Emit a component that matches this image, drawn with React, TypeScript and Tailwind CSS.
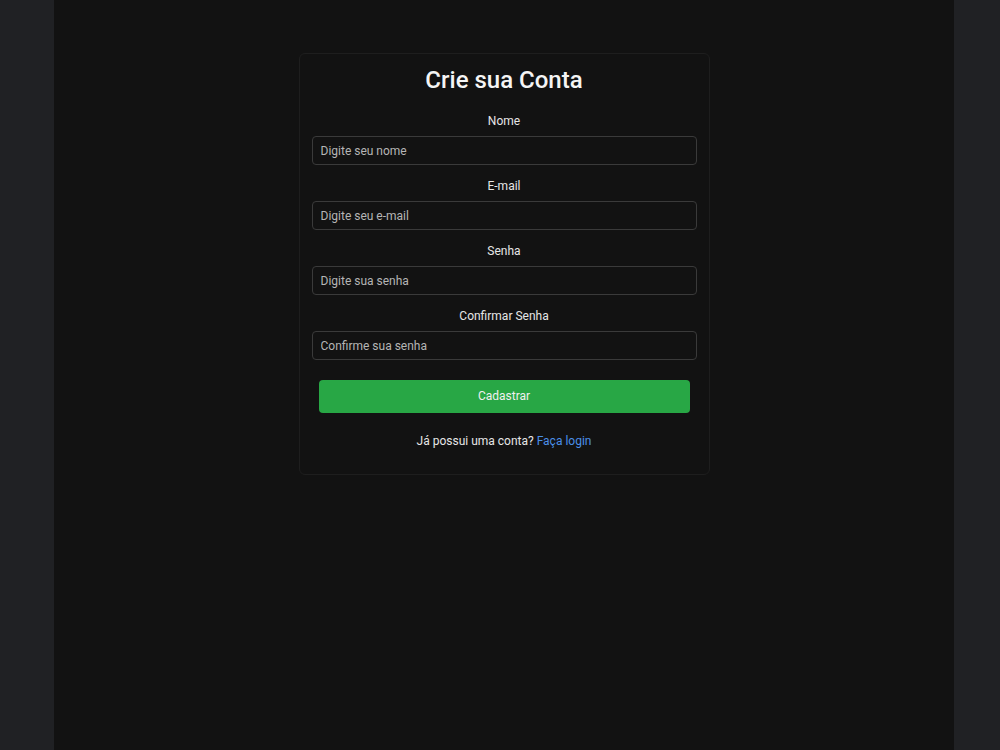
export default function App() {
    const fields = [
        { label: 'Nome', type: 'text', placeholder: 'Digite seu nome' },
        { label: 'E-mail', type: 'email', placeholder: 'Digite seu e-mail' },
        { label: 'Senha', type: 'password', placeholder: 'Digite sua senha' },
        { label: 'Confirmar Senha', type: 'password', placeholder: 'Confirme sua senha' },
    ];

    return (
        <div className="min-h-screen bg-[#202124] font-['Roboto',sans-serif]">
            <div className="ml-[54px] min-h-screen w-[900px] bg-[#121212] pt-[53px]">
                <div className="mx-auto w-[411px] rounded-md border border-[#1e1e1e] bg-[#121212] px-3 pt-3 pb-[24px]">
                    <h2 className="text-center text-[24px] leading-[29px] font-medium text-[#f5f5f5]">Crie sua Conta</h2>
                    <form className="mt-[18px] flex flex-col">
                        {fields.map(({ label, type, placeholder }) => (
                            <div key={label} className="mb-[13px] flex flex-col">
                                <label className="mb-[6px] text-center text-[12px] leading-[17px] text-[#e6e6e6]">{label}</label>
                                <input
                                    type={type}
                                    placeholder={placeholder}
                                    className="h-[29px] rounded-[4px] border border-[#3a3a3a] bg-[#121212] px-2 text-[12px] text-[#e6e6e6] placeholder:text-[#b5b5b5] outline-none"
                                />
                            </div>
                        ))}
                        <button
                            type="button"
                            className="mx-[7px] mt-[7px] h-[33px] rounded-[4px] bg-[#28a745] pb-[2px] text-[12px] text-[#f0f0f0]"
                        >
                            Cadastrar
                        </button>
                    </form>
                    <p className="mt-[20px] text-center text-[12px] leading-[17px] text-[#e6e6e6]">
                        Já possui uma conta? <a href="#" className="text-[#4a8fe7]">Faça login</a>
                    </p>
                </div>
            </div>
        </div>
    );
}
